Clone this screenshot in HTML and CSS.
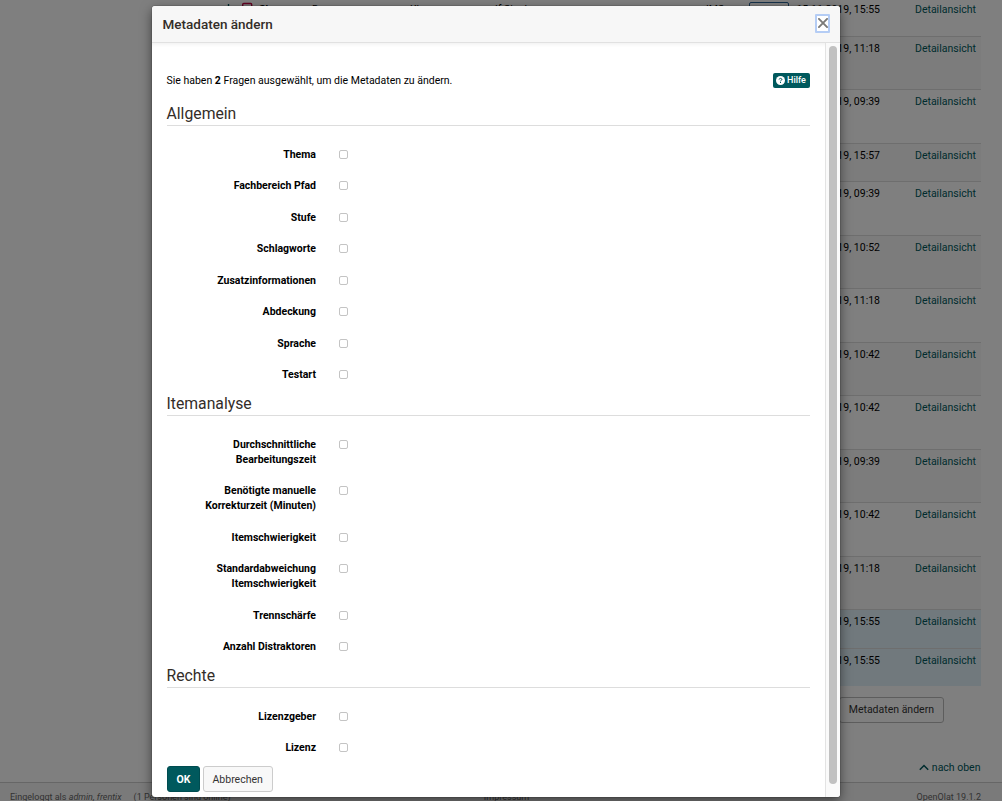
FILE: index.html
```html
<!DOCTYPE html>
<html lang="de">
<head>
<meta charset="utf-8">
<title>Metadaten ändern</title>
<link rel="stylesheet" href="styles.css">
</head>
<body>
<div class="page">
  <div class="table">
    <div class="row r0"><div class="peek"><svg class="peek-icons" width="60" height="8" viewBox="0 0 60 8"><path d="M5.5 4v4" stroke="#00595d" stroke-width="1.4"/><path d="M19.7 8V4.7q0-1.2 1-1.2h7q1 0 1 1.2V8" fill="none" stroke="#c00040" stroke-width="1.4"/></svg><b class="p1">Sk</b><span class="p2">Demo</span><span class="p3">Kl</span><span class="p4">If Single</span><span class="p5">IMS</span><span class="chip">Final</span></div><span class="date">15.11.2019, 15:55</span><a>Detailansicht</a></div>
    <div class="row alt r1"><span class="date">15.11.2019, 11:18</span><a>Detailansicht</a></div>
    <div class="row r2"><span class="date">15.11.2019, 09:39</span><a>Detailansicht</a></div>
    <div class="row alt r3"><span class="date">15.11.2019, 15:57</span><a>Detailansicht</a></div>
    <div class="row r4"><span class="date">15.11.2019, 09:39</span><a>Detailansicht</a></div>
    <div class="row alt r5"><span class="date">15.11.2019, 10:52</span><a>Detailansicht</a></div>
    <div class="row r6"><span class="date">15.11.2019, 11:18</span><a>Detailansicht</a></div>
    <div class="row alt r7"><span class="date">15.11.2019, 10:42</span><a>Detailansicht</a></div>
    <div class="row r8"><span class="date">15.11.2019, 10:42</span><a>Detailansicht</a></div>
    <div class="row alt r9"><span class="date">15.11.2019, 09:39</span><a>Detailansicht</a></div>
    <div class="row r10"><span class="date">15.11.2019, 10:42</span><a>Detailansicht</a></div>
    <div class="row alt r11"><span class="date">15.11.2019, 11:18</span><a>Detailansicht</a></div>
    <div class="row sel r12"><span class="date">15.11.2019, 15:55</span><a>Detailansicht</a></div>
    <div class="row sel r13"><span class="date">15.11.2019, 15:55</span><a>Detailansicht</a></div>
  </div>
  <div class="actions"><span class="btn">Metadaten ändern</span></div>
  <div class="top-link"><svg width="10" height="7" viewBox="0 0 10 7"><path d="M.8 5.8 5 1.5l4.2 4.3" fill="none" stroke="#00595d" stroke-width="1.5"/></svg>nach oben</div>
  <footer class="footer">
    <div class="login">Eingeloggt als <i>admin, frentix</i><span class="online">(1 Personen sind online)</span></div>
    <div class="imprint">Impressum</div>
    <div class="version">OpenOlat 19.1.2</div>
  </footer>
</div>
<div class="backdrop"></div>
<div class="modal">
  <header class="modal-head">
    <h4>Metadaten ändern</h4>
    <button class="close" aria-label="Schliessen"><svg width="10" height="10" viewBox="0 0 10 10"><path d="M.3.3l9.4 9.4M9.7.3L.3 9.7" stroke="#7b7a78" stroke-width="1.9"/></svg></button>
  </header>
  <div class="modal-main">
    <div class="content">
      <div class="intro"><p>Sie haben <b>2</b> Fragen ausgewählt, um die Metadaten zu ändern.</p>
        <span class="help"><svg width="9" height="9" viewBox="0 0 9 9"><circle cx="4.5" cy="4.5" r="4.5" fill="#fff"/><path d="M3.1 3.5C3.2 2 5.9 2 5.9 3.5 5.9 4.4 4.5 4.2 4.5 5.3M4.5 6v1" fill="none" stroke="#00595d" stroke-width="1"/></svg>Hilfe</span></div>
      <fieldset><legend>Allgemein</legend>
        <label><span>Thema</span><input type="checkbox"></label>
        <label><span>Fachbereich Pfad</span><input type="checkbox"></label>
        <label><span>Stufe</span><input type="checkbox"></label>
        <label><span>Schlagworte</span><input type="checkbox"></label>
        <label><span>Zusatzinformationen</span><input type="checkbox"></label>
        <label><span>Abdeckung</span><input type="checkbox"></label>
        <label><span>Sprache</span><input type="checkbox"></label>
        <label><span>Testart</span><input type="checkbox"></label>
      </fieldset>
      <fieldset><legend>Itemanalyse</legend>
        <label><span>Durchschnittliche Bearbeitungszeit</span><input type="checkbox"></label>
        <label><span>Benötigte manuelle Korrekturzeit (Minuten)</span><input type="checkbox"></label>
        <label><span>Itemschwierigkeit</span><input type="checkbox"></label>
        <label><span>Standardabweichung Itemschwierigkeit</span><input type="checkbox"></label>
        <label><span>Trennschärfe</span><input type="checkbox"></label>
        <label><span>Anzahl Distraktoren</span><input type="checkbox"></label>
      </fieldset>
      <fieldset class="rights"><legend>Rechte</legend>
        <label><span>Lizenzgeber</span><input type="checkbox"></label>
        <label><span>Lizenz</span><input type="checkbox"></label>
      </fieldset>
      <div class="buttons"><button class="primary">OK</button><button>Abbrechen</button></div>
    </div>
    <div class="scrollbar"><div class="thumb"></div></div>
  </div>
</div>
</body>
</html>
```

FILE: styles.css
```css
* { box-sizing: border-box; }
body { margin: 0; width: 1002px; height: 801px; overflow: hidden; font: 10.5px/15px Roboto, sans-serif; color: #000; background: #fff; }
.page { height: 801px; overflow: hidden; display: flex; flex-direction: column; }
.table { width: 821px; margin-left: 160px; flex: none; }
.row { display: flex; justify-content: flex-end; padding: 4px 5px 0 0; border-top: 1px solid #ddd; position: relative; }
.row a { width: 61px; margin-left: 35px; color: #00595d; white-space: nowrap; }
.row .date { white-space: nowrap; }
.r0 { height: 36px; padding-top: 2px; border-top: 0; }
.r1, .r5, .r7, .r9, .r11 { height: 53px; }
.r2, .r4, .r6, .r8, .r10 { height: 54px; }
.r3, .r13 { height: 38px; }
.r12 { height: 39px; }
.alt { background: #f9f9f9; }
.sel { background: #e3f3fa; }
.peek { position: absolute; left: -160px; top: 2px; width: 800px; height: 12px; }
.peek > * { position: absolute; top: 0; white-space: nowrap; }
.peek .peek-icons { left: 223px; top: -2px; }
.p1 { left: 259px; }
.p2 { left: 312px; }
.p3 { left: 410px; }
.p4 { left: 495px; }
.p5 { left: 706px; }
.chip { left: 749px; width: 40px; height: 15px; border: 1px solid #2a6496; border-radius: 2px; text-align: center; color: #236; }
.actions { display: flex; justify-content: flex-end; width: 944px; padding-top: 11px; }
.btn { height: 26px; padding: 4px 9px; border: 1px solid #bbb; border-radius: 3px; color: #333; }
.top-link { display: flex; justify-content: flex-end; align-items: center; gap: 3px; width: 980.5px; margin-top: 37px; color: #00595d; }
.footer { display: grid; grid-template-columns: 1fr auto 1fr; margin-top: 7px; padding: 7px 21px 0 10px; height: 40px; border-top: 1px solid #ccc; background: #f5f5f5; color: #666; font-size: 9px; flex: none; }
.online { margin-left: 12px; }
.imprint { margin-left: 22px; }
.version { text-align: right; }
.backdrop { position: absolute; inset: 0; background: rgba(0,0,0,.5); }
.modal { position: absolute; left: 152px; top: 6px; width: 688px; height: 791px; background: #fff; border-radius: 3px; box-shadow: 0 4px 12px rgba(0,0,0,.5), 0 0 1px #000; overflow: hidden; display: flex; flex-direction: column; }
.modal-head { height: 37px; flex: none; display: flex; align-items: center; justify-content: space-between; padding: 1px 10px 0 10.5px; border-bottom: 1px solid #e1e1e1; background: #f7f7f7; }
h4 { margin: 0; font-size: 13.5px; font-weight: 500; color: #332d28; }
.close { width: 15px; height: 19px; margin-bottom: 3px; padding: 0; border: 2px solid #b5cdf5; border-radius: 1px; background: #fff; display: grid; place-items: center; }
.modal-main { flex: 1; display: flex; box-shadow: inset 0 4px 4px -3px #eee; }
.content { width: 673px; padding: 30px 15px 0 14.5px; }
.intro { display: flex; justify-content: space-between; align-items: flex-start; height: 32px; }
p { margin: 0; }
.help { display: flex; align-items: center; gap: 2px; width: 37px; height: 15px; padding-left: 3px; border-radius: 2px; background: #00595d; color: #fff; font-size: 9px; font-weight: 500; }
fieldset { min-width: 0; margin: 0 0 -3.5px; padding: 0; border: 0; }
.rights { margin-bottom: -5.5px; }
legend { display: block; width: 100%; height: 21px; margin-bottom: 20.5px; padding: 0; border-bottom: 1px solid #ddd; font-size: 15.75px; line-height: 17px; color: #332d28; }
label { display: grid; grid-template-columns: 149.5px 10px; column-gap: 23px; margin-bottom: 16.5px; font-weight: 700; }
label span { text-align: right; padding-left: 20px; }
input { appearance: none; width: 9px; height: 9px; margin: 3px 0 0; border: 1px solid #c4c4c4; border-radius: 2px; background: #fff; }
.buttons { display: flex; gap: 3px; }
.buttons button { height: 26px; padding: 0 9px; border: 1px solid #ccc; border-radius: 3px; background: #f8f8f8; color: #333; font: 10.5px Roboto, sans-serif; }
.buttons .primary { width: 33px; border-color: #004c50; background: #00595d; color: #fff; font-weight: 700; }
.scrollbar { width: 15px; padding: 3px 3px 0 3px; border-left: 1px solid #e3e3e3; background: #fafafa; }
.thumb { width: 8px; height: 738px; border-radius: 4px; background: #c1c1c1; }
```
